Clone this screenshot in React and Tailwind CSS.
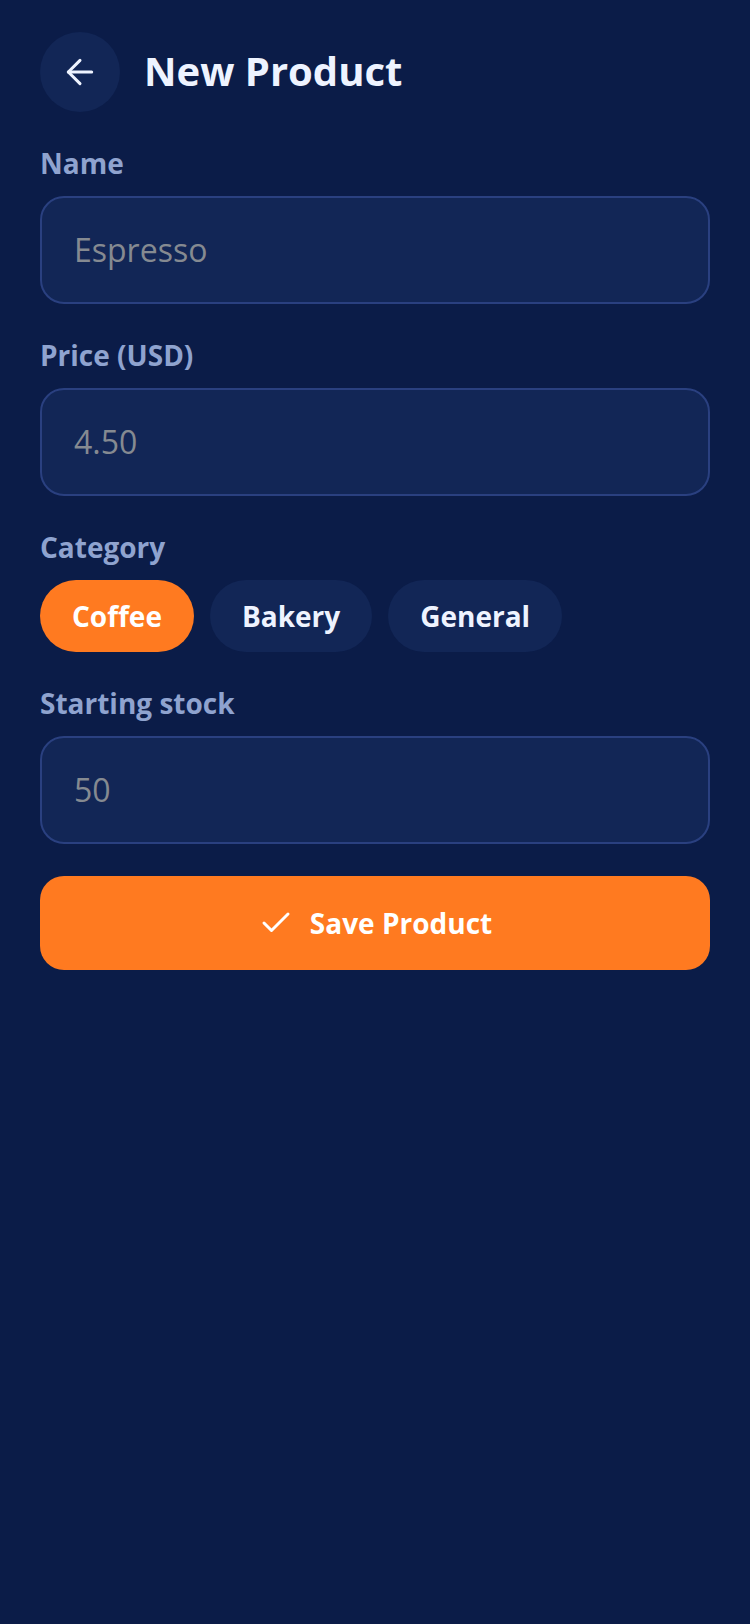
import React from "react";
import { ArrowLeft, Check } from "lucide-react";

const font = "font-['Open_Sans',sans-serif]";

function Field({ label, placeholder }) {
  return (
    <div className="flex flex-col">
      <div className="text-[28px] leading-[38px] font-bold text-[#8fa3cf]">{label}</div>
      <div className="mt-[14px] flex h-[108px] items-center rounded-[24px] border-2 border-[#2a4080] bg-[#122656] px-[32px] text-[32px] text-[#858a91]">
        {placeholder}
      </div>
    </div>
  );
}

function Chip({ children, active }) {
  return (
    <div
      className={
        active
          ? "flex h-[72px] items-center rounded-full bg-[#ff7a20] px-[32px] text-[28px] font-bold text-white"
          : "flex h-[72px] items-center rounded-full bg-[#122656] px-[32px] text-[28px] font-bold text-[#eef3ff]"
      }
    >
      {children}
    </div>
  );
}

export default function App() {
  return (
    <div className={`${font} flex min-h-[1624px] flex-col bg-[#0b1c48] px-[40px] pt-[32px]`}>
      {/* Header */}
      <div className="flex items-center gap-[24px]">
        <div className="flex h-[80px] w-[80px] items-center justify-center rounded-full bg-[#122656]">
          <ArrowLeft size={40} strokeWidth={1.8} className="text-[#eef3ff]" />
        </div>
        <div className="pb-[2px] text-[40px] leading-[54px] font-bold text-[#eef3ff]">New Product</div>
      </div>

      <div className="mt-[32px] flex flex-col gap-[32px]">
        <Field label="Name" placeholder="Espresso" />
        <Field label="Price (USD)" placeholder="4.50" />
        <div className="flex flex-col">
          <div className="text-[28px] leading-[38px] font-bold text-[#8fa3cf]">Category</div>
          <div className="mt-[14px] flex gap-[16px]">
            <Chip active>Coffee</Chip>
            <Chip>Bakery</Chip>
            <Chip>General</Chip>
          </div>
        </div>
        <Field label="Starting stock" placeholder="50" />
        <div className="flex h-[94px] items-center justify-center gap-[16px] rounded-[24px] bg-[#ff7a20] text-[28px] font-bold text-white">
          <Check size={36} strokeWidth={2} />
          Save Product
        </div>
      </div>
    </div>
  );
}
